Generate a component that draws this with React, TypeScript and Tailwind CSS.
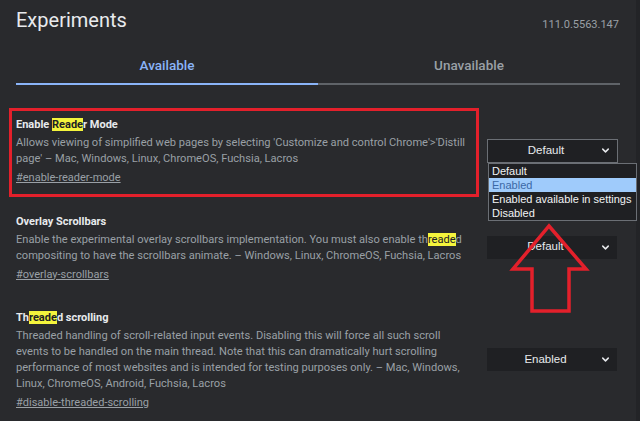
import React from 'react';
import { ChevronDown } from 'lucide-react';

function Mark({ children }: { children: React.ReactNode }) {
  return <mark className="bg-[#f4f43c] text-[#202124]">{children}</mark>;
}

function FlagSelect({ value, open }: { value: string; open?: boolean }) {
  const options = ['Default', 'Enabled', 'Enabled available in settings', 'Disabled'];
  return (
    <div
      className={
        open
          ? 'relative flex h-[24px] w-[131px] items-center border border-[#6b6f75] bg-[#1f2023] pl-[4px] pr-[6px]'
          : 'relative flex h-[23px] w-[130px] items-center bg-[#1f2023] pl-[4px] pr-[6px]'
      }
    >
      <span className="flex-1 text-center text-[11.5px] text-[#e8eaed] [font-family:'Liberation_Sans',Arial,sans-serif]">
        {value}
      </span>
      <ChevronDown size={11} strokeWidth={3.2} className="text-[#e8eaed]" />
      {open && (
        <div className="absolute left-0 top-[23px] z-10 w-[149px] whitespace-nowrap border border-[#6b6f75] bg-[#1f2023] [font-family:'Liberation_Sans',Arial,sans-serif]">
          {options.map((o) => (
            <div
              key={o}
              className={
                o === 'Enabled'
                  ? 'h-[14px] bg-[#9fcbfb] px-[3px] text-[11px] leading-[14px] text-[#3b68a6]'
                  : 'h-[14px] px-[3px] text-[11px] leading-[14px] text-[#f1f3f4]'
              }
            >
              {o}
            </div>
          ))}
        </div>
      )}
    </div>
  );
}

function Experiment({
  title,
  children,
  link,
  select,
}: {
  title: React.ReactNode;
  children: React.ReactNode;
  link: string;
  select: React.ReactNode;
}) {
  return (
    <div className="flex items-center">
      <div className="w-[471px]">
        <div className="text-[11px] font-bold leading-[20px] text-[#e8eaed]">{title}</div>
        <div className="whitespace-nowrap text-[11.1px] leading-[16px] text-[#9aa0a6]">{children}</div>
        <div className="mt-[3px] text-[11px] leading-[16px] text-[#9aa0a6] underline">{link}</div>
      </div>
      <div>{select}</div>
    </div>
  );
}

export default function App() {
  return (
    <div className="relative flex h-[421px] w-[640px] overflow-hidden bg-[#292a2d] [font-family:Roboto,'Noto_Sans',sans-serif]">
      <div className="flex-1 pl-[16px] pr-[16px]">
        <div className="flex w-[604px] items-start justify-between">
          <h1 className="pt-[8px] text-[20px] leading-[24px] text-[#e8eaed]">Experiments</h1>
          <span className="pt-[18px] pr-[1px] text-[11px] leading-[14px] text-[#9aa0a6]">111.0.5563.147</span>
        </div>

        <div className="mt-[11px] flex w-[604px]">
          <div className="flex-1 border-b-2 border-[#8ab4f8] pt-[14px] pb-[10px] text-center text-[13.5px] font-medium leading-[16px] text-[#8ab4f8]">
            Available
          </div>
          <div className="flex-1 border-b-2 border-[#5f6368] pt-[14px] pb-[10px] text-center text-[13.5px] font-medium leading-[16px] text-[#9aa0a6]">
            Unavailable
          </div>
        </div>

        <div className="flex flex-col gap-[25.5px] pt-[30px]">
          <Experiment
            title={
              <>
                Enable <Mark>Reade</Mark>r Mode
              </>
            }
            link="#enable-reader-mode"
            select={<FlagSelect value="Default" open />}
          >
            Allows viewing of simplified web pages by selecting 'Customize and control Chrome'&gt;'Distill
            <br />
            page' – Mac, Windows, Linux, ChromeOS, Fuchsia, Lacros
          </Experiment>

          <Experiment title="Overlay Scrollbars" link="#overlay-scrollbars" select={<FlagSelect value="Default" />}>
            Enable the experimental overlay scrollbars implementation. You must also enable th<Mark>reade</Mark>d
            <br />
            compositing to have the scrollbars animate. – Windows, Linux, ChromeOS, Fuchsia, Lacros
          </Experiment>

          <Experiment
            title={
              <>
                Th<Mark>reade</Mark>d scrolling
              </>
            }
            link="#disable-threaded-scrolling"
            select={<FlagSelect value="Enabled" />}
          >
            Threaded handling of scroll-related input events. Disabling this will force all such scroll
            <br />
            events to be handled on the main thread. Note that this can dramatically hurt scrolling
            <br />
            performance of most websites and is intended for testing purposes only. – Mac, Windows,
            <br />
            Linux, ChromeOS, Android, Fuchsia, Lacros
          </Experiment>
        </div>
      </div>
      <div className="w-[4px] bg-[#232427]" />

      {/* annotations */}
      <div className="pointer-events-none absolute left-[9px] top-[108px] h-[89px] w-[470px] border-[3px] border-[#e3202b]" />
      <svg className="pointer-events-none absolute left-0 top-0" width="640" height="421">
        <polygon
          points="549,226 586,269 569,269 569,311 532,311 532,269 513,269"
          fill="none"
          stroke="#e3202b"
          strokeWidth="3.5"
          strokeLinejoin="miter"
        />
      </svg>
    </div>
  );
}
